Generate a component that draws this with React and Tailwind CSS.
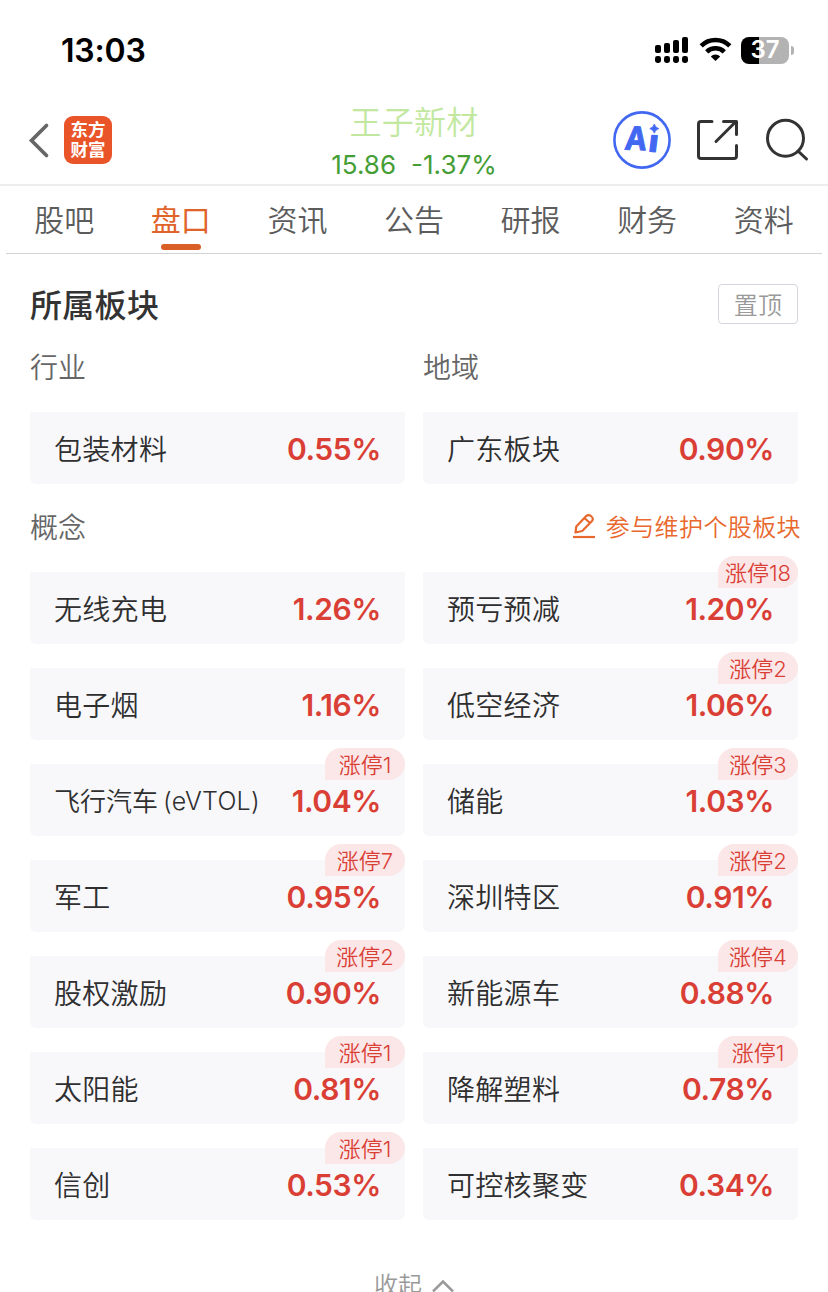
const tabs = ['股吧', '盘口', '资讯', '公告', '研报', '财务', '资料'];

const concepts = [
  { name: '无线充电', change: '1.26%' },
  { name: '预亏预减', change: '1.20%', limit: 18 },
  { name: '电子烟', change: '1.16%' },
  { name: '低空经济', change: '1.06%', limit: 2 },
  { name: '飞行汽车', suffix: '(eVTOL)', change: '1.04%', limit: 1 },
  { name: '储能', change: '1.03%', limit: 3 },
  { name: '军工', change: '0.95%', limit: 7 },
  { name: '深圳特区', change: '0.91%', limit: 2 },
  { name: '股权激励', change: '0.90%', limit: 2 },
  { name: '新能源车', change: '0.88%', limit: 4 },
  { name: '太阳能', change: '0.81%', limit: 1 },
  { name: '降解塑料', change: '0.78%', limit: 1 },
  { name: '信创', change: '0.53%', limit: 1 },
  { name: '可控核聚变', change: '0.34%' },
];

function StatusBar() {
  return (
    <div className="flex h-[100px] items-center justify-between pl-[61px] pr-[34px]">
      <span className="pt-px text-[32px] leading-none font-semibold tracking-[-0.2px] text-black">13:03</span>
      <div className="flex items-center">
        <svg width="34" height="28" viewBox="0 0 34 28" fill="#000">
          <rect x="0" y="9" width="6" height="8" rx="2" />
          <rect x="9" y="7" width="6" height="10" rx="2" />
          <rect x="18" y="4" width="6" height="13" rx="2" />
          <rect x="27" y="1" width="6" height="16" rx="2" />
          <rect x="0" y="20" width="6" height="7" rx="2.4" />
          <rect x="9" y="20" width="6" height="7" rx="2.4" />
          <rect x="18" y="20" width="6" height="7" rx="2.4" />
          <rect x="27" y="20" width="6" height="7" rx="2.4" />
        </svg>
        <svg className="ml-[10px]" width="33" height="28" viewBox="0 0 33 28" fill="none" stroke="#000" strokeWidth="4.6">
          <path d="M2.2 9.8 A20.6 20.6 0 0 1 30.8 9.8" />
          <path d="M7.7 15.8 A12.7 12.7 0 0 1 25.3 15.8" />
          <path d="M16.5 25 L11.8 20.4 A6.8 6.8 0 0 1 21.2 20.4 Z" fill="#000" stroke="none" />
        </svg>
        <div className="ml-[9px] flex h-[27px] w-12 items-center justify-center rounded-[8px] bg-linear-to-r from-black from-[37.5%] to-[#b3b3b3] to-[37.5%]">
          <span className="text-[24px] leading-none font-semibold text-white">37</span>
        </div>
        <div className="ml-[2px] h-[9px] w-[3px] rounded-r-full bg-[#b3b3b3]" />
      </div>
    </div>
  );
}

function Header() {
  return (
    <header className="grid h-[86px] grid-cols-[1fr_auto_1fr] border-b-2 border-[#ededed]">
      <div className="flex items-start pt-4 pl-7">
        <svg width="22" height="48" viewBox="0 0 22 48" fill="none" stroke="#666" strokeWidth="3.7" strokeLinecap="round">
          <path d="M18.5 9.5 L3.5 24.5 L18.5 39.5" />
        </svg>
        <div className="ml-[14px] flex h-12 w-12 flex-col items-center justify-center rounded-[9px] bg-[#ea5429] text-[17.5px] leading-[20px] font-bold text-white">
          <span>东方</span>
          <span>财富</span>
        </div>
      </div>
      <div className="flex flex-col items-center">
        <h1 className="mt-[3px] text-[32px] leading-[40px] font-[350] tracking-[0.3px] text-[#c2e89f]">王子新材</h1>
        <div className="mt-[6px] flex gap-[15px] text-[26px] leading-[32px] text-[#459e35]">
          <span>15.86</span>
          <span>-1.37%</span>
        </div>
      </div>
      <div className="flex items-start justify-end pt-[10px] pr-[18px]">
        <svg width="60" height="60" viewBox="0 0 60 60">
          <circle cx="30" cy="30" r="27.6" fill="none" stroke="#4268f1" strokeWidth="2.6" />
          <g fill="#4268f1" stroke="#4268f1" strokeWidth="1" strokeLinejoin="round" className="font-bold">
            <text x="0" y="0" fontSize="32" textLength="22" lengthAdjust="spacingAndGlyphs" transform="translate(12 39.5) rotate(2) skewX(-4)">A</text>
            <text x="0" y="0" fontSize="30" textLength="10" lengthAdjust="spacingAndGlyphs" transform="translate(35.5 41.5) rotate(3) skewX(-4)">ı</text>
          </g>
          <path d="M42.3 14 Q43.3 17.6 46.8 18.6 Q43.3 19.6 42.3 23.2 Q41.3 19.6 37.8 18.6 Q41.3 17.6 42.3 14Z" fill="#4268f1" stroke="#4268f1" strokeWidth="0.8" />
        </svg>
        <svg className="ml-[25px]" width="42" height="60" viewBox="0 0 42 60" fill="none" stroke="#333" strokeWidth="3" strokeLinecap="round" strokeLinejoin="round">
          <path d="M15 11.5 H4 Q1.5 11.5 1.5 14 V46 Q1.5 48.5 4 48.5 H37 Q39.5 48.5 39.5 46 V35.5" />
          <path d="M26.5 11.5 H39.5 V24.5" />
          <path d="M19 31.5 L38 12.5" />
        </svg>
        <svg className="ml-[27px]" width="44" height="60" viewBox="0 0 44 60" fill="none" stroke="#333" strokeWidth="3" strokeLinecap="round">
          <circle cx="19.5" cy="28.3" r="18" />
          <path d="M32 41 L40.5 49" />
        </svg>
      </div>
    </header>
  );
}

function Tabs() {
  return (
    <nav className="mx-[6px] grid h-[68px] grid-cols-7 border-b border-[#d2d2d2]">
      {tabs.map((tab) => {
        const active = tab === '盘口';
        return (
          <div key={tab} className="flex flex-col items-center pt-[13px]">
            <span className={active ? 'text-[30px] leading-[42px] text-[#e0642a]' : 'text-[30px] leading-[42px] font-[350] text-[#5c5c5c]'}>{tab}</span>
            {active && <span className="mt-[3px] h-[6px] w-10 rounded-full bg-[#d95f26]" />}
          </div>
        );
      })}
    </nav>
  );
}

function BoardCard({ name, suffix, change, limit }) {
  return (
    <div className="relative flex h-[72px] items-center justify-between rounded-b-[6px] bg-[#f8f8fb] pr-6 pl-6">
      <span className={suffix ? 'flex items-center gap-[5px] pt-[3px] text-[26px] text-[#2f2f2f]' : 'pt-[3px] text-[28px] tracking-[0.3px] text-[#2f2f2f]'}>
        <span className="font-[350]">{name}</span>
        {suffix && <span className="text-[25px] font-[350] tracking-[0.2px]">{suffix}</span>}
      </span>
      <span className="pt-[2px] text-[30px] leading-none font-semibold tracking-[-0.4px] text-[#da3f36]">{change}</span>
      {limit && (
        <span className="absolute -top-4 right-0 flex h-8 w-20 items-center justify-center rounded-t-[16px] rounded-br-[16px] bg-[#fbe7e8] pt-[2px] text-[22px] font-[350] text-[#da3f36]">
          涨停{limit}
        </span>
      )}
    </div>
  );
}

export default function App() {
  return (
    <div className="h-[1292px] w-[828px] overflow-hidden bg-white font-['Inter','Noto_Sans_CJK_SC',sans-serif]">
      <StatusBar />
      <Header />
      <Tabs />
      <main className="px-[30px] pt-[30px]">
        <div className="flex h-10 items-center justify-between">
          <h2 className="pt-[3px] text-[32px] leading-10 font-medium tracking-[0.3px] text-[#333]">所属板块</h2>
          <button className="h-10 w-20 rounded-[4px] border border-[#d5d5df] pt-[3px] text-[24px] leading-[35px] font-[350] tracking-[0.3px] text-[#999]">置顶</button>
        </div>
        <div className="mt-[24px] grid grid-cols-2 gap-x-[18px] text-[28px] leading-10 font-[350] text-[#666]">
          <span>行业</span>
          <span>地域</span>
        </div>
        <div className="mt-[24px] grid grid-cols-2 gap-x-[18px]">
          <BoardCard name="包装材料" change="0.55%" />
          <BoardCard name="广东板块" change="0.90%" />
        </div>
        <div className="-mr-[3px] mt-[24px] flex h-10 items-center justify-between">
          <span className="text-[28px] font-[350] text-[#666]">概念</span>
          <span className="flex items-center text-[24px] font-[350] tracking-[0.4px] text-[#e8682d]">
            <svg className="mr-[10px] mb-[4px]" width="24" height="26" viewBox="0 0 24 26" fill="none" stroke="#e8682d" strokeWidth="2.2" strokeLinejoin="round">
              <path d="M1 24 H23" />
              <path d="M3.5 19.5 L4.3 13.5 L14 3.2 Q16.5 1 19 3 Q22 5.5 20 8 L10.2 18 Z M12.7 5.2 L18 10" />
            </svg>
            参与维护个股板块
          </span>
        </div>
        <div className="mt-[24px] grid grid-cols-2 gap-x-[18px] gap-y-6">
          {concepts.map((c) => (
            <BoardCard key={c.name} {...c} />
          ))}
        </div>
        <div className="mt-[46px] flex items-center justify-center text-[24px] leading-10 font-[350] text-[#999]">
          <span>收起</span>
          <svg className="ml-[10px]" width="22" height="14" viewBox="0 0 22 14" fill="none" stroke="#999" strokeWidth="2.5">
            <path d="M1 12.5 L11 2.5 L21 12.5" />
          </svg>
        </div>
      </main>
    </div>
  );
}
